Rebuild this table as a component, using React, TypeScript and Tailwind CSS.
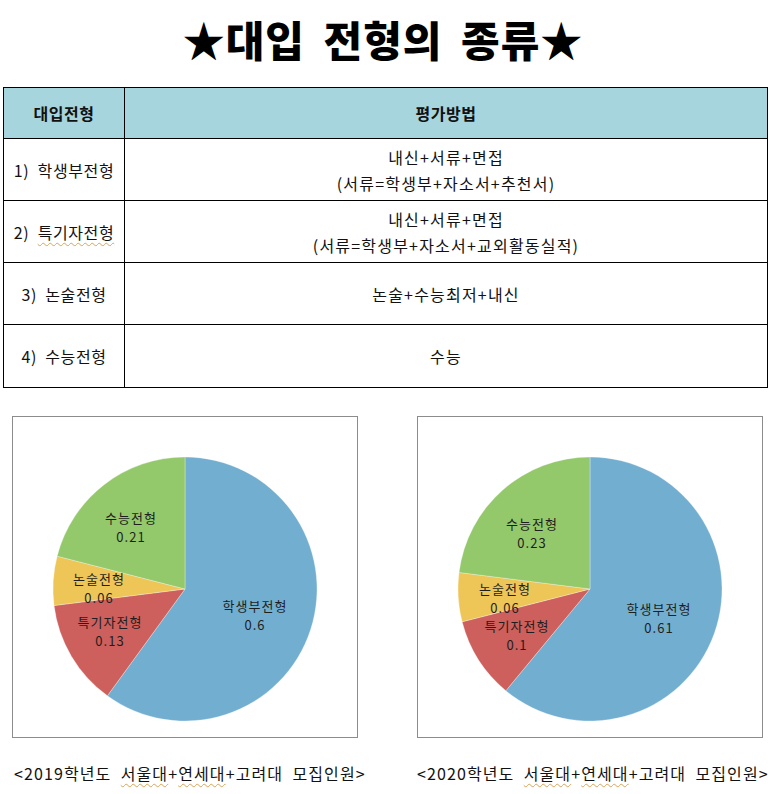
import React from "react";

type Slice = { label: string; value: number; color: string; lx: number; ly: number };

const COLORS = { blue: "#72aed0", red: "#cd5f5c", yellow: "#eec557", green: "#93c86b" };

function arcPath(cx: number, cy: number, r: number, a0: number, a1: number) {
  const p = (a: number) => {
    const rad = ((a - 90) * Math.PI) / 180;
    return [cx + r * Math.cos(rad), cy + r * Math.sin(rad)];
  };
  const [x0, y0] = p(a0);
  const [x1, y1] = p(a1);
  const large = a1 - a0 > 180 ? 1 : 0;
  return `M ${cx} ${cy} L ${x0} ${y0} A ${r} ${r} 0 ${large} 1 ${x1} ${y1} Z`;
}

function Pie({ slices }: { slices: Slice[] }) {
  const cx = 173;
  const cy = 173;
  const r = 132;
  let acc = 0;
  return (
    <div className="w-[346px] h-[322px] border border-[#8c8c8c] bg-white">
      <svg width="344" height="320" viewBox="1 1 344 320">
        {slices.map((s, i) => {
          const a0 = acc * 360;
          acc += s.value;
          const a1 = acc * 360;
          return (
            <path key={i} d={arcPath(cx, cy, r, a0, a1)} fill={s.color} stroke="#ffffff" strokeWidth="0.6" strokeOpacity="0.5" />
          );
        })}
        {slices.map((s, i) => (
          <g key={"t" + i} fill="#1e1e1e" fontSize="13" letterSpacing="1" style={{ fontFamily: '"Noto Sans CJK KR", "Noto Sans", sans-serif' }}>
            <text x={s.lx} y={s.ly - 1} textAnchor="middle">
              {s.label}
            </text>
            <text x={s.lx} y={s.ly + 18} textAnchor="middle">
              {String(s.value)}
            </text>
          </g>
        ))}
      </svg>
    </div>
  );
}

const chart2019: Slice[] = [
  { label: "학생부전형", value: 0.6, color: COLORS.blue, lx: 243, ly: 196 },
  { label: "특기자전형", value: 0.13, color: COLORS.red, lx: 98, ly: 212 },
  { label: "논술전형", value: 0.06, color: COLORS.yellow, lx: 87, ly: 169 },
  { label: "수능전형", value: 0.21, color: COLORS.green, lx: 119, ly: 108 },
];

const chart2020: Slice[] = [
  { label: "학생부전형", value: 0.61, color: COLORS.blue, lx: 242, ly: 199 },
  { label: "특기자전형", value: 0.1, color: COLORS.red, lx: 100, ly: 216 },
  { label: "논술전형", value: 0.06, color: COLORS.yellow, lx: 88, ly: 179 },
  { label: "수능전형", value: 0.23, color: COLORS.green, lx: 115, ly: 114 },
];

const rows: { name: string; method: string[]; squiggle?: boolean }[] = [
  { name: "1)  학생부전형", method: ["내신+서류+면접", "(서류=학생부+자소서+추천서)"] },
  { name: "2)  특기자전형", method: ["내신+서류+면접", "(서류=학생부+자소서+교외활동실적)"], squiggle: true },
  { name: "3)  논술전형", method: ["논술+수능최저+내신"] },
  { name: "4)  수능전형", method: ["수능"] },
];

const sq = "underline decoration-wavy decoration-[#d9a35a] decoration-1 underline-offset-[3px]";

export default function App() {
  return (
    <div
      className="w-[772px] h-[794px] bg-white text-[#111] overflow-hidden"
      style={{ fontFamily: '"Noto Sans CJK KR", "Noto Sans", sans-serif' }}
    >
      <div className="h-[87px] flex items-start justify-center pt-[12px]">
        <h1 className="text-[42px] leading-[54px] font-black text-black tracking-[1px] [word-spacing:8px] pr-[6px]">
          ★대입 전형의 종류★
        </h1>
      </div>
      <div className="px-[3px] pr-[4px]">
        <div className="border-[1.5px] border-black">
          <div className="flex h-[51px] bg-[#a6d5de] border-b border-black">
            <div className="w-[121px] border-r border-black flex items-center justify-center text-[16px] font-bold tracking-[0.5px]">
              대입전형
            </div>
            <div className="flex-1 flex items-center justify-center text-[16px] font-bold tracking-[0.5px]">평가방법</div>
          </div>
          {rows.map((r, i) => (
            <div key={i} className={`flex h-[62px] ${i < rows.length - 1 ? "border-b border-black" : ""}`}>
              <div className="w-[121px] border-r border-black flex items-center justify-center text-[16px] tracking-[0.6px] whitespace-pre">
                {r.squiggle ? (
                  <span>
                    2){"  "}
                    <span className={sq}>특기자전형</span>
                  </span>
                ) : (
                  r.name
                )}
              </div>
              <div className="flex-1 flex flex-col items-center justify-center text-[16px] tracking-[1.2px] leading-[26px]">
                {r.method.map((m, j) => (
                  <div key={j}>{m}</div>
                ))}
              </div>
            </div>
          ))}
        </div>
      </div>
      <div className="flex pl-[12px] gap-[59px] mt-[28px]">
        <Pie slices={chart2019} />
        <Pie slices={chart2020} />
      </div>
      <div className="flex mt-[23px] text-[16px] tracking-[1.1px] whitespace-pre">
        <div className="w-[404px] pl-[14px]">
          {"<2019학년도  "}
          <span className={sq}>서울대</span>+<span className={sq}>연세대</span>
          {"+고려대  모집인원>"}
        </div>
        <div className="pl-[13px]">
          {"<2020학년도  "}
          <span className={sq}>서울대</span>+<span className={sq}>연세대</span>
          {"+고려대  모집인원>"}
        </div>
      </div>
    </div>
  );
}
